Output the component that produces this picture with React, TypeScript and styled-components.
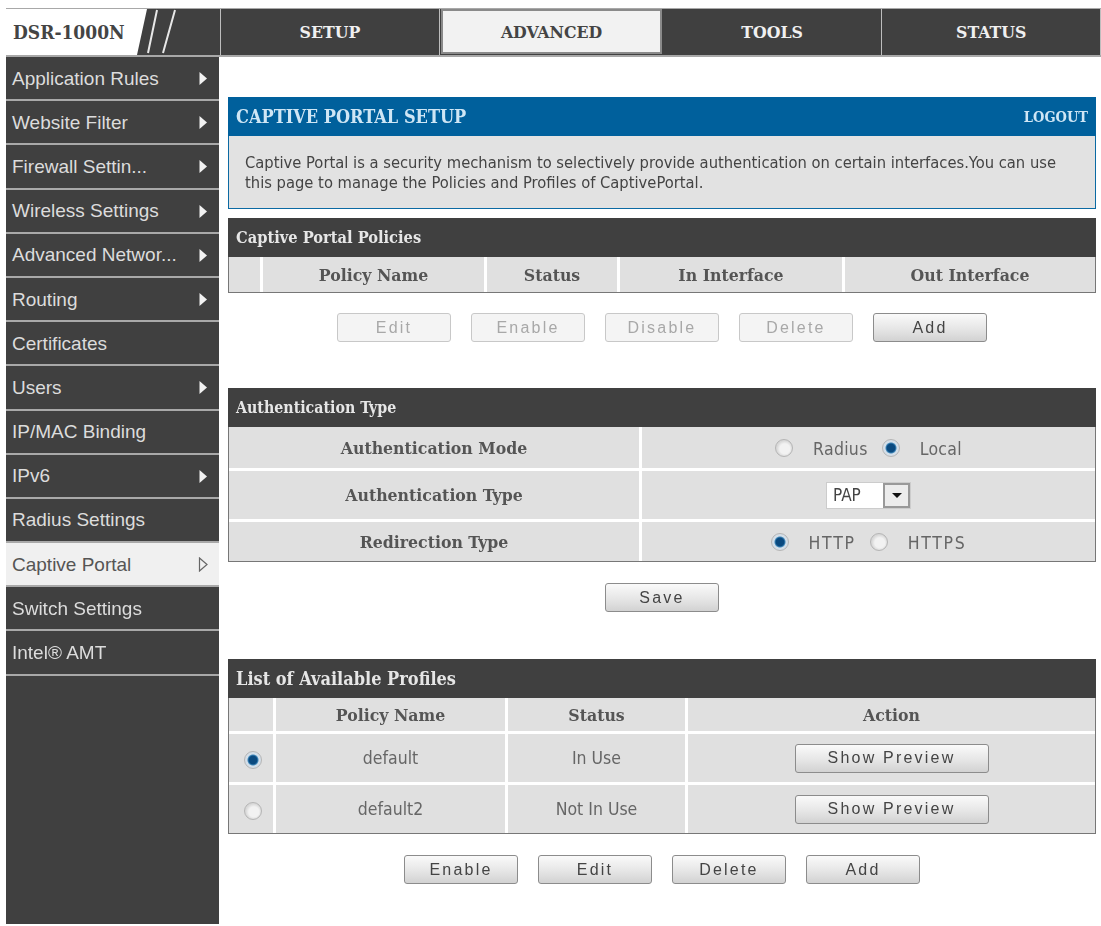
import React from "react";
import styled, { createGlobalStyle } from "styled-components";

const Global = createGlobalStyle`
  html, body { margin: 0; padding: 0; background: #fff; }
  * { box-sizing: border-box; }
`;

const serif = `"DejaVu Serif Condensed", "DejaVu Serif", serif`;
const sans = `"DejaVu Sans Condensed", "DejaVu Sans", sans-serif`;
const arial = `"Liberation Sans", Arial, sans-serif`;

const Page = styled.div`
  width: 1101px;
  height: 926px;
  padding: 8px 0 0 6px;
  overflow: hidden;
  filter: blur(0.45px);
`;

const TopBar = styled.header`
  display: flex;
  height: 49px;
  background: #404040;
  border-top: 1px solid #a8a8a8;
  border-bottom: 2px solid #a8a8a8;
`;

const Logo = styled.div`
  width: 215px;
  position: relative;
  display: flex;
  align-items: center;
  padding-left: 7px;
  background: #fff;
  border-right: 1px solid #bdbdbd;
  font: bold 19px ${serif};
  color: #444;
`;

const LogoMark = styled.svg`
  position: absolute;
  left: 0;
  top: 0;
`;

const LogoText = styled.span`
  position: relative;
`;

const NavItem = styled.div<{ $active?: boolean; $w: number }>`
  width: ${(p) => p.$w}px;
  display: flex;
  align-items: center;
  justify-content: center;
  font: bold 17.5px ${serif};
  color: ${(p) => (p.$active ? "#444" : "#f0f0f0")};
  background: ${(p) => (p.$active ? "#f2f2f2" : "transparent")};
  border-right: 1px solid #bdbdbd;
  ${(p) => (p.$active ? "border: 2px solid #8a8a8a; margin: 0 1px 1px 1px;" : "")}
`;

const Body = styled.div`
  display: flex;
`;

const Side = styled.nav`
  width: 213px;
  height: 867px;
  background: #404040;
  flex: none;
`;

const SideItem = styled.div<{ $active?: boolean }>`
  height: 44.2px;
  display: flex;
  align-items: center;
  justify-content: space-between;
  padding: 1px 11px 0 6px;
  font: 19px ${arial};
  color: ${(p) => (p.$active ? "#555" : "#dcdcdc")};
  background: ${(p) => (p.$active ? "#f0f0f0" : "#404040")};
  border-bottom: 2px solid #a9a9a9;
`;

const Arrow = styled.svg`
  flex: none;
`;

const Main = styled.main`
  width: 868px;
  margin-left: 9px;
  padding-top: 40px;
`;

const TitleBar = styled.div`
  height: 39px;
  background: #00609c;
  display: flex;
  align-items: center;
  justify-content: space-between;
  padding: 0 8px;
  font: bold 18px ${serif};
  color: #cfe6f5;
`;

const Logout = styled.span`
  font-size: 14.5px;
`;

const Desc = styled.div`
  height: 73px;
  background: #e2e2e2;
  border: 1px solid #0b6aa3;
  border-top: 0;
  padding: 17px 16px 0 16px;
  font: 16.4px/20px ${sans};
  color: #444;
  white-space: nowrap;
`;

const Card = styled.section<{ $top: number }>`
  margin-top: ${(p) => p.$top}px;
  border: 1px solid #777;
  border-top: 0;
  background: #e0e0e0;
`;

const CardHead = styled.div<{ $size: number }>`
  height: 39px;
  margin: 0 -1px;
  background: #404040;
  display: flex;
  align-items: center;
  padding-left: 8px;
  font: bold ${(p) => p.$size}px ${serif};
  color: #e6e6e6;
`;

const Row = styled.div<{ $cols: string; $h: number }>`
  display: grid;
  grid-template-columns: ${(p) => p.$cols};
  height: ${(p) => p.$h}px;
  & + & { border-top: 3px solid #fff; }
`;

const Cell = styled.div<{ $bold?: boolean }>`
  display: flex;
  align-items: center;
  justify-content: center;
  gap: 6px;
  font: ${(p) => (p.$bold ? "bold 17.5px" : "17.5px")} ${(p) => (p.$bold ? serif : sans)};
  color: ${(p) => (p.$bold ? "#555" : "#666")};
  & + & { border-left: 3px solid #fff; }
`;

const RadioLabel = styled.span<{ $wide?: boolean }>`
  margin: 2px 8px 0 14px;
  letter-spacing: ${(p) => (p.$wide ? "1.7px" : "0.3px")};
  &:last-child { margin-right: 0; }
`;

const Radio = styled.span<{ $on?: boolean }>`
  width: 18px;
  height: 18px;
  border-radius: 50%;
  flex: none;
  border: 1px solid #b5b5b5;
  background: ${(p) =>
    p.$on
      ? "radial-gradient(circle at 50% 50%, #0a4a80 0 4px, #3e86b8 5px, #d5e0ea 6px, #cfd8e2 100%)"
      : "radial-gradient(circle at 55% 55%, #f2f2f2 0 5px, #d8d8d8 8px)"};
`;

const RowRadio = styled(Radio)`
  margin: 3px 0 0 3px;
`;

const Select = styled.div`
  display: flex;
  width: 85px;
  height: 27px;
  background: #fff;
  border: 1px solid #ccc;
  font: 17px ${sans};
  color: #444;
`;

const SelectValue = styled.span`
  flex: 1;
  padding-left: 6px;
  line-height: 24px;
`;

const SelectBtn = styled.span`
  width: 27px;
  border: 2px solid #999;
  background: #ececec;
  display: flex;
  align-items: center;
  justify-content: center;
`;

const Caret = styled.span`
  width: 0;
  height: 0;
  border-left: 5px solid transparent;
  border-right: 5px solid transparent;
  border-top: 5px solid #111;
`;

const Buttons = styled.div<{ $top: number }>`
  display: flex;
  justify-content: center;
  gap: 20px;
  margin-top: ${(p) => p.$top}px;
`;

const Btn = styled.div<{ $off?: boolean; $w?: number }>`
  width: ${(p) => p.$w ?? 114}px;
  height: 29px;
  border-radius: 3px;
  display: flex;
  align-items: center;
  justify-content: center;
  font: 16px ${arial};
  letter-spacing: 2.2px;
  color: ${(p) => (p.$off ? "#a8a8a8" : "#444")};
  border: 1px solid ${(p) => (p.$off ? "#c8c8c8" : "#8c8c8c")};
  background: ${(p) => (p.$off ? "#f4f4f4" : "linear-gradient(#fafafa, #e6e6e6 55%, #d2d2d2)")};
`;

const menu: [string, boolean][] = [
  ["Application Rules", true],
  ["Website Filter", true],
  ["Firewall Settin...", true],
  ["Wireless Settings", true],
  ["Advanced Networ...", true],
  ["Routing", true],
  ["Certificates", false],
  ["Users", true],
  ["IP/MAC Binding", false],
  ["IPv6", true],
  ["Radius Settings", false],
  ["Captive Portal", true],
  ["Switch Settings", false],
  ["Intel® AMT", false],
];

const policyCols = "31px 224px 133px 225px 1fr";
const authCols = "410px 1fr";
const listCols = "44px 232px 180px 1fr";

export default function App() {
  return (
    <Page>
      <Global />
      <TopBar>
        <Logo>
          <LogoMark width="214" height="46" viewBox="0 0 214 46">
            <path d="M131 46 L141 0 H214 V46 Z" fill="#404040" />
            <path d="M142 44 L151 1 M157 44 L169 1" stroke="#e8e8e8" strokeWidth="2" fill="none" />
          </LogoMark>
          <LogoText>DSR-1000N</LogoText>
        </Logo>
        <NavItem $w={220}>SETUP</NavItem>
        <NavItem $w={221} $active>ADVANCED</NavItem>
        <NavItem $w={220}>TOOLS</NavItem>
        <NavItem $w={219}>STATUS</NavItem>
      </TopBar>
      <Body>
        <Side>
          {menu.map(([label, arrow]) => {
            const active = label === "Captive Portal";
            return (
              <SideItem key={label} $active={active}>
                {label}
                {arrow && (
                  <Arrow width="10" height="15" viewBox="0 0 10 15">
                    {active ? (
                      <path d="M1.5 1 L9 7.5 L1.5 14 Z" fill="none" stroke="#666" strokeWidth="1.2" />
                    ) : (
                      <path d="M1.5 1 L9 7.5 L1.5 14 Z" fill="#f2f2f2" />
                    )}
                  </Arrow>
                )}
              </SideItem>
            );
          })}
        </Side>
        <Main>
          <TitleBar>
            CAPTIVE PORTAL SETUP
            <Logout>LOGOUT</Logout>
          </TitleBar>
          <Desc>
            Captive Portal is a security mechanism to selectively provide authentication on certain interfaces.You can use
            <br />
            this page to manage the Policies and Profiles of CaptivePortal.
          </Desc>
          <Card $top={9}>
            <CardHead $size={16.3}>Captive Portal Policies</CardHead>
            <Row $cols={policyCols} $h={35}>
              <Cell $bold />
              <Cell $bold>Policy Name</Cell>
              <Cell $bold>Status</Cell>
              <Cell $bold>In Interface</Cell>
              <Cell $bold>Out Interface</Cell>
            </Row>
          </Card>
          <Buttons $top={20}>
            <Btn $off>Edit</Btn>
            <Btn $off>Enable</Btn>
            <Btn $off>Disable</Btn>
            <Btn $off>Delete</Btn>
            <Btn>Add</Btn>
          </Buttons>
          <Card $top={46}>
            <CardHead $size={15.8}>Authentication Type</CardHead>
            <Row $cols={authCols} $h={41}>
              <Cell $bold>Authentication Mode</Cell>
              <Cell>
                <Radio />
                <RadioLabel>Radius</RadioLabel>
                <Radio $on />
                <RadioLabel>Local</RadioLabel>
              </Cell>
            </Row>
            <Row $cols={authCols} $h={51}>
              <Cell $bold>Authentication Type</Cell>
              <Cell>
                <Select>
                  <SelectValue>PAP</SelectValue>
                  <SelectBtn><Caret /></SelectBtn>
                </Select>
              </Cell>
            </Row>
            <Row $cols={authCols} $h={42}>
              <Cell $bold>Redirection Type</Cell>
              <Cell>
                <Radio $on />
                <RadioLabel $wide>HTTP</RadioLabel>
                <Radio />
                <RadioLabel $wide>HTTPS</RadioLabel>
              </Cell>
            </Row>
          </Card>
          <Buttons $top={21}>
            <Btn>Save</Btn>
          </Buttons>
          <Card $top={47}>
            <CardHead $size={18}>List of Available Profiles</CardHead>
            <Row $cols={listCols} $h={33}>
              <Cell $bold />
              <Cell $bold>Policy Name</Cell>
              <Cell $bold>Status</Cell>
              <Cell $bold>Action</Cell>
            </Row>
            <Row $cols={listCols} $h={51}>
              <Cell><RowRadio $on /></Cell>
              <Cell>default</Cell>
              <Cell>In Use</Cell>
              <Cell><Btn $w={194}>Show Preview</Btn></Cell>
            </Row>
            <Row $cols={listCols} $h={51}>
              <Cell><RowRadio /></Cell>
              <Cell>default2</Cell>
              <Cell>Not In Use</Cell>
              <Cell><Btn $w={194}>Show Preview</Btn></Cell>
            </Row>
          </Card>
          <Buttons $top={21}>
            <Btn>Enable</Btn>
            <Btn>Edit</Btn>
            <Btn>Delete</Btn>
            <Btn>Add</Btn>
          </Buttons>
        </Main>
      </Body>
    </Page>
  );
}
